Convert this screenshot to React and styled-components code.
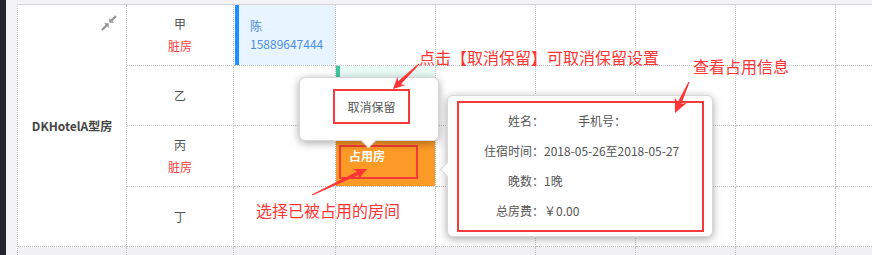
import React from 'react'
import styled, { createGlobalStyle, css } from 'styled-components'

const GlobalStyle = createGlobalStyle`
  html, body {
    margin: 0;
    padding: 0;
  }
  body {
    font-family: "Noto Sans CJK SC", "Noto Sans", sans-serif;
    background: #f2f2f6;
  }
  * {
    box-sizing: border-box;
  }
`

const RED = '#ff3535'

const rooms = [
  { name: '甲', dirty: true },
  { name: '乙' },
  { name: '丙', dirty: true },
  { name: '丁' },
]

const dateCols = 7

// tapered annotation arrow, tail -> head
const arrowPoints = (t, h, headLen, headW, tailW = 1, neckW = 4) => {
  const dx = h[0] - t[0]
  const dy = h[1] - t[1]
  const len = Math.sqrt(dx * dx + dy * dy)
  const ux = dx / len
  const uy = dy / len
  const px = -uy
  const py = ux
  const b = [h[0] - ux * headLen, h[1] - uy * headLen]
  const n = [h[0] - ux * (headLen - 3), h[1] - uy * (headLen - 3)]
  const pts = [
    [t[0] + (px * tailW) / 2, t[1] + (py * tailW) / 2],
    [n[0] + (px * neckW) / 2, n[1] + (py * neckW) / 2],
    [b[0] + (px * headW) / 2, b[1] + (py * headW) / 2],
    h,
    [b[0] - (px * headW) / 2, b[1] - (py * headW) / 2],
    [n[0] - (px * neckW) / 2, n[1] - (py * neckW) / 2],
    [t[0] - (px * tailW) / 2, t[1] - (py * tailW) / 2],
  ]
  return pts.map(p => p.map(v => v.toFixed(1)).join(',')).join(' ')
}

const ShrinkIcon = () => (
  <svg width="16" height="16" viewBox="0 0 16 16" fill="#999">
    <line x1="15" y1="1" x2="10" y2="6" stroke="#999" strokeWidth="2.4" />
    <polygon points="8.3,7.7 8.3,3 13,7.7" />
    <polygon points="7.7,8.3 7.7,13 3,8.3" />
    <line x1="1" y1="15" x2="6" y2="10" stroke="#999" strokeWidth="2.4" />
  </svg>
)

const App = () => {
  return (
    <Page>
      <GlobalStyle />
      <Sidebar />
      <Main>
        <Board>
          <TypeCell>
            <CornerIcon>
              <ShrinkIcon />
            </CornerIcon>
            <TypeName>DKHotelA型房</TypeName>
          </TypeCell>
          {rooms.map((room, r) => (
            <React.Fragment key={room.name}>
              <RoomCell style={{ gridRow: r + 1 }}>
                <span>{room.name}</span>
                {room.dirty && <Dirty>脏房</Dirty>}
              </RoomCell>
              {Array.from({ length: dateCols }).map((_, c) => (
                <DateCell key={c}>
                  {r === 0 && c === 0 && (
                    <Booking $tone="blue">
                      <span>陈</span>
                      <span>15889647444</span>
                    </Booking>
                  )}
                  {r === 1 && c === 1 && <Booking $tone="green" />}
                  {r === 2 && c === 1 && (
                    <Booking $tone="orange">
                      <Highlight $w={79} $h={34}>
                        <OccupiedLabel>占用房</OccupiedLabel>
                      </Highlight>
                    </Booking>
                  )}
                </DateCell>
              ))}
            </React.Fragment>
          ))}
          {Array.from({ length: dateCols + 2 }).map((_, i) => (
            <FooterCell key={i} />
          ))}
        </Board>
      </Main>

      <CancelPopover>
        <Highlight $w={77} $h={35}>
          <CancelButton>取消保留</CancelButton>
        </Highlight>
      </CancelPopover>

      <InfoPopover>
        <Highlight $w={247} $h={131}>
          <InfoList>
            <InfoRow>
              <InfoLabel>姓名：</InfoLabel>
              <InfoGap />
              <span>手机号：</span>
            </InfoRow>
            <InfoRow>
              <InfoLabel>住宿时间：</InfoLabel>
              <span>2018-05-26至2018-05-27</span>
            </InfoRow>
            <InfoRow>
              <InfoLabel>晚数：</InfoLabel>
              <span>1晚</span>
            </InfoRow>
            <InfoRow>
              <InfoLabel>总房费：</InfoLabel>
              <span>￥0.00</span>
            </InfoRow>
          </InfoList>
        </Highlight>
      </InfoPopover>

      <Note $x={419} $y={47}>点击【取消保留】可取消保留设置</Note>
      <Note $x={693} $y={56}>查看占用信息</Note>
      <Note $x={256} $y={200}>选择已被占用的房间</Note>

      <ArrowLayer width="872" height="255" viewBox="0 0 872 255">
        <polygon points={arrowPoints([419, 64], [393, 89], 12, 12)} />
        <polygon points={arrowPoints([689, 82], [675, 113], 14, 13)} />
        <polygon points={arrowPoints([312, 195], [367, 169], 13, 12)} />
      </ArrowLayer>
    </Page>
  )
}

const Page = styled.div`
  position: relative;
  width: 872px;
  height: 255px;
  overflow: hidden;
  display: flex;
`

const Sidebar = styled.div`
  flex: none;
  width: 6px;
  background: #23252e;
`

const Main = styled.div`
  flex: 1;
  padding: 4px 0 0 11px;
  background: #f3f3f6;
  overflow: hidden;
`

const Board = styled.div`
  display: grid;
  grid-template-columns: 109px 107px 102px repeat(6, 100px);
  grid-template-rows: 61px 60px 61px 60px 12px;
  width: max-content;
  background: #fff;
  border-top: 1px solid #d4d4d8;
  border-left: 1px dotted #c4c4c4;
`

const cellLines = css`
  border-right: 1px dotted #c4c4c4;
  border-bottom: 1px dotted #c4c4c4;
`

const TypeCell = styled.div`
  ${cellLines};
  grid-column: 1;
  grid-row: 1 / span 4;
  display: grid;
  place-items: center;
`

const CornerIcon = styled.div`
  grid-area: 1 / 1;
  align-self: start;
  justify-self: end;
  margin: 10px 9px 0 0;
  line-height: 0;
`

const TypeName = styled.div`
  grid-area: 1 / 1;
  font-size: 12px;
  font-weight: bold;
  color: #444;
`

const RoomCell = styled.div`
  ${cellLines};
  grid-column: 2;
  display: flex;
  flex-direction: column;
  align-items: center;
  justify-content: center;
  font-size: 12px;
  line-height: 22px;
  color: #555;
`

const Dirty = styled.span`
  color: #ff4040;
`

const DateCell = styled.div`
  ${cellLines};
  display: flex;
`

const FooterCell = styled.div`
  border-right: 1px dotted #c4c4c4;
  background: #f1f1f5;
`

const tones = {
  blue: css`
    background: #e8f4ff;
    border-left: 4px solid #1e8fff;
    margin-left: 1px;
    padding-left: 11px;
    justify-content: center;
    color: #4a8fe6;
  `,
  green: css`
    background: #eafbf5;
    border-left: 4px solid #42c6a0;
  `,
  orange: css`
    background: #fb9a26;
    padding: 19px 0 0 3px;
  `,
}

const Booking = styled.div`
  flex: 1;
  display: flex;
  flex-direction: column;
  font-size: 12px;
  line-height: 18px;
  ${p => tones[p.$tone]};
`

// red marker boxes from the annotated screenshot
const Highlight = styled.div`
  width: ${p => p.$w}px;
  height: ${p => p.$h}px;
  border: 2px solid #f43a3a;
`

const OccupiedLabel = styled.div`
  padding: 1px 0 0 8px;
  font-size: 12px;
  line-height: 16px;
  font-weight: bold;
  color: #fff;
`

const popover = css`
  position: absolute;
  background: #fff;
  border: 1px solid #d8d8d8;
  border-radius: 6px;
  box-shadow: 0 2px 8px rgba(0, 0, 0, 0.35);

  &::after {
    content: '';
    position: absolute;
    width: 10px;
    height: 10px;
    background: #fff;
    transform: rotate(45deg);
  }
`

const CancelPopover = styled.div`
  ${popover};
  left: 299px;
  top: 77px;
  width: 140px;
  height: 64px;
  padding: 11px 0 0 33px;

  &::after {
    left: 63px;
    bottom: -6px;
    border-right: 1px solid #d8d8d8;
    border-bottom: 1px solid #d8d8d8;
  }
`

const CancelButton = styled.div`
  height: 100%;
  display: flex;
  align-items: center;
  justify-content: center;
  font-size: 12px;
  color: #555;
`

const InfoPopover = styled.div`
  ${popover};
  left: 447px;
  top: 95px;
  width: 266px;
  height: 142px;
  padding: 5px 0 0 9px;

  &::after {
    left: -6px;
    top: 68px;
    border-left: 1px solid #d8d8d8;
    border-bottom: 1px solid #d8d8d8;
  }
`

const InfoList = styled.div`
  padding-top: 3px;
  font-size: 12px;
  line-height: 30px;
  color: #555;
`

const InfoRow = styled.div`
  display: flex;
  white-space: nowrap;
`

const InfoLabel = styled.span`
  width: 85px;
  text-align: right;
`

const InfoGap = styled.span`
  width: 34px;
`

const Note = styled.div`
  position: absolute;
  left: ${p => p.$x}px;
  top: ${p => p.$y}px;
  font-size: 16px;
  line-height: 20px;
  color: ${RED};
  white-space: nowrap;
`

const ArrowLayer = styled.svg`
  position: absolute;
  left: 0;
  top: 0;
  pointer-events: none;
  fill: ${RED};
`

export default App
